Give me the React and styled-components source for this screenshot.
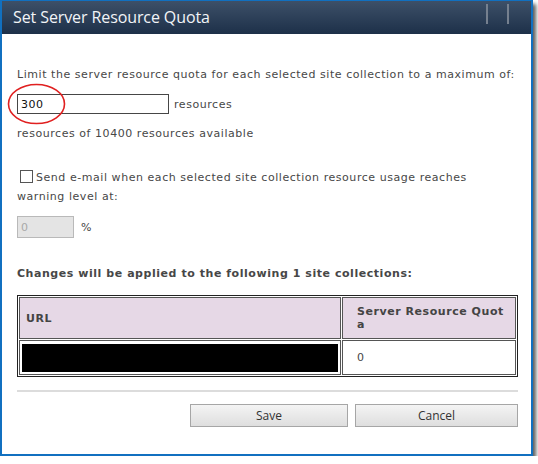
import React from 'react';
import styled, { createGlobalStyle } from 'styled-components';

const Global = createGlobalStyle`
  html, body { margin: 0; padding: 0; background: #fff; }
  body { font-family: "DejaVu Sans", Verdana, sans-serif; }
`;

const Dialog = styled.div`
  width: 529px;
  height: 453px;
  border: 2px solid #1170c0;
  border-top-width: 1px;
  background: #fff;
  box-shadow: 3px 4px 4px rgba(0, 0, 0, 0.65);
  display: flex;
  flex-direction: column;
`;

const TitleBar = styled.div`
  height: 33px;
  background: linear-gradient(#3d5068, #1d3049);
  display: flex;
  align-items: center;
  padding: 0 0 0 11px;
`;

const Title = styled.div`
  flex: 1;
  color: #f2f4f7;
  font-family: "Open Sans", sans-serif;
  font-size: 16px;
  letter-spacing: -0.1px;
  padding-bottom: 2px;
`;

const TitleButtons = styled.div`
  display: flex;
  gap: 19px;
  padding-right: 22px;
  align-self: flex-start;
  padding-top: 3px;
`;

const TitleDivider = styled.span`
  width: 2px;
  height: 20px;
  background: #75808f;
`;

const Body = styled.div`
  padding: 0 15px 0 15px;
  color: #474747;
  font-size: 11px;
  letter-spacing: 0.55px;
`;

const Text = styled.div`
  margin-top: ${(p) => p.top || 0}px;
  line-height: 19px;
  font-weight: ${(p) => (p.bold ? 'bold' : 'normal')};
`;

const Row = styled.div`
  display: flex;
  align-items: center;
  gap: ${(p) => p.gap || 5}px;
  margin-top: ${(p) => p.top || 0}px;
  position: relative;
`;

const Input = styled.div`
  width: ${(p) => p.w}px;
  height: ${(p) => p.h}px;
  box-sizing: border-box;
  border: 1px solid ${(p) => (p.disabled ? '#b9b9b9' : '#464646')};
  background: ${(p) => (p.disabled ? '#e4e4e4' : '#fff')};
  color: ${(p) => (p.disabled ? '#a8a8a8' : '#111')};
  font-size: 11px;
  padding-left: 3px;
  display: flex;
  align-items: center;
`;

const Circle = styled.svg`
  position: absolute;
  left: -10px;
  top: -11px;
  pointer-events: none;
`;

const Check = styled.span`
  display: inline-block;
  width: 11px;
  height: 11px;
  border: 1px solid #555;
  background: #fff;
  vertical-align: -2px;
  margin: 0 3px 0 3px;
`;

const Table = styled.table`
  margin-top: 12px;
  width: 501px;
  border: 1px solid #222;
  border-spacing: 1px;
  font-size: 11px;
`;

const Th = styled.th`
  background: #e6d8e6;
  border: 1px solid #555;
  height: 40px;
  text-align: left;
  padding: ${(p) => (p.wide ? '0 5px 0 14px' : '0 6px')};
  width: ${(p) => p.w || 'auto'};
  line-height: 13px;
  word-break: break-all;
  color: #444;
`;

const Td = styled.td`
  border: 1px solid #555;
  height: 31px;
  padding: ${(p) => (p.pad ? '0 6px 0 14px' : '1px 2px')};
`;

const Redacted = styled.div`
  background: #000;
  height: 28px;
  width: 316px;
`;

const Separator = styled.div`
  margin-top: 13px;
  height: 2px;
  background: #dcdcdc;
  width: 501px;
`;

const Buttons = styled.div`
  display: flex;
  justify-content: flex-end;
  gap: 7px;
  margin-top: 12px;
  width: 501px;
`;

const Button = styled.button`
  width: ${(p) => p.w}px;
  height: 23px;
  border: 1px solid #a6a6a6;
  background: linear-gradient(#f4f4f4, #dedede);
  font-family: "Open Sans", sans-serif;
  font-size: 12px;
  color: #333;
  padding: 0;
`;

export default function App() {
  return (
    <>
      <Global />
      <Dialog>
        <TitleBar>
          <Title>Set Server Resource Quota</Title>
          <TitleButtons>
            <TitleDivider />
            <TitleDivider />
          </TitleButtons>
        </TitleBar>
        <Body>
          <Text top={31}>
            Limit the server resource quota for each selected site collection to a maximum of:
          </Text>
          <Row top={10}>
            <Input w={152} h={20}>300</Input>
            <span>resources</span>
            <Circle width="60" height="42" viewBox="0 0 60 42">
              <ellipse cx="29.5" cy="21" rx="28" ry="19.5" fill="none" stroke="#e02020" strokeWidth="1.6" />
            </Circle>
          </Row>
          <Text top={10}>resources of 10400 resources available</Text>
          <Text top={25}>
            <Check />Send e-mail when each selected site collection resource usage reaches warning level at:
          </Text>
          <Row top={10} gap={7}>
            <Input w={57} h={22} disabled>0</Input>
            <span>%</span>
          </Row>
          <Text top={26} bold>Changes will be applied to the following 1 site collections:</Text>
          <Table>
            <thead>
              <tr>
                <Th w="308px">URL</Th>
                <Th wide>Server Resource Quota</Th>
              </tr>
            </thead>
            <tbody>
              <tr>
                <Td><Redacted /></Td>
                <Td pad>0</Td>
              </tr>
            </tbody>
          </Table>
          <Separator />
          <Buttons>
            <Button w={158}>Save</Button>
            <Button w={163}>Cancel</Button>
          </Buttons>
        </Body>
      </Dialog>
    </>
  );
}
